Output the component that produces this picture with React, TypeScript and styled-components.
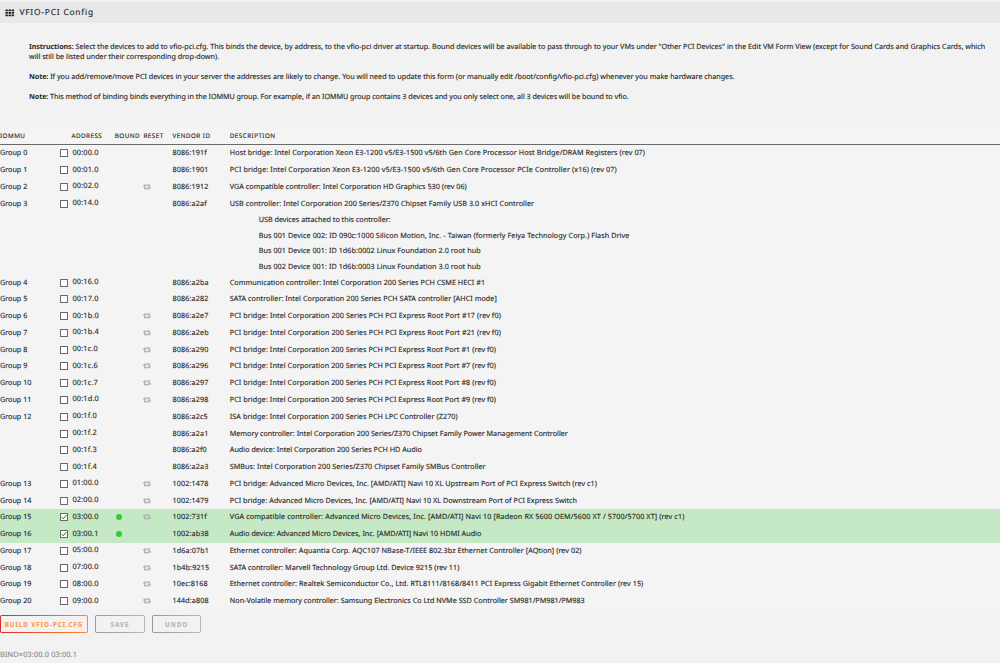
import React from "react";
import styled, { createGlobalStyle } from "styled-components";

const Global = createGlobalStyle`
  * { box-sizing: border-box; }
  body {
    margin: 0;
    background: #f2f2f2;
    color: #2b2b2b;
    font-family: "Noto Sans", sans-serif;
    font-size: 7.2px;
    text-rendering: geometricPrecision;
    -webkit-text-stroke: 0.14px currentColor;
    overflow: hidden;
  }
`;

const Page = styled.main`
  display: flex;
  flex-direction: column;
  height: 663px;
  padding-top: 2px;
`;

const TitleBar = styled.header`
  display: flex;
  align-items: center;
  gap: 4.4px;
  height: 21px;
  padding-left: 5px;
  background: #e8e8e8;
  font-size: 8.4px;
  letter-spacing: 0.8px;
  svg { display: block; }
`;

const Notes = styled.section`
  height: 105px;
  padding: 19.4px 0 0 29px;
  line-height: 10px;
  b { letter-spacing: -0.1px; -webkit-text-stroke: 0; }
`;

const Note = styled.p<{ $track: number }>`
  margin: 0 0 10px;
  white-space: nowrap;
  letter-spacing: ${(p) => p.$track}px;
`;

const Table = styled.section`
  height: 481px;
  background: #f4f4f4;
`;

const Grid = styled.div`
  display: grid;
  grid-template-columns: 59px 12.5px 43.3px 28.7px 29px 57.3px 1fr;
  white-space: nowrap;
`;

const HeadRow = styled(Grid)`
  height: 17px;
  align-items: center;
  padding-bottom: 1px;
  border-bottom: 1px solid #6a6a6a;
  font-size: 6.3px;
  letter-spacing: 0.46px;
`;

const Row = styled(Grid)<{ $bound?: boolean }>`
  grid-auto-rows: 16.77px;
  align-items: center;
  background: ${(p) => (p.$bound ? "#c5e8c5" : "transparent")};
`;

const Address = styled.span`
  padding: 0 0 1px 1px;
  font-size: 7.4px;
  letter-spacing: 0.14px;
`;

const Vendor = styled.span`
  letter-spacing: 0.14px;
`;

const Description = styled.span<{ $track: number }>`
  letter-spacing: ${(p) => p.$track}px;
`;

const Box = styled.span`
  display: grid;
  place-items: center;
  width: 8px;
  height: 8px;
  margin-left: 0.5px;
  border: 1px solid #686868;
  background: #fff;
  svg { display: block; }
`;

const Dot = styled.span`
  display: block;
  width: 6px;
  height: 6px;
  margin-left: 1.5px;
  border-radius: 50%;
  background: #33cc33;
`;

const AttachedList = styled.div`
  height: 62.2px;
  padding: 1px 0 0 258.7px;
  line-height: 15.6px;
  white-space: nowrap;
`;

const Attached = styled.div<{ $track: number }>`
  letter-spacing: ${(p) => p.$track}px;
`;

const Actions = styled.div`
  display: flex;
  gap: 7px;
  padding-top: 6px;
`;

const Button = styled.button<{ $w: number; $primary?: boolean }>`
  width: ${(p) => p.$w}px;
  height: 18px;
  padding: 0;
  border: 1px solid transparent;
  border-radius: 2px;
  background: ${(p) =>
    p.$primary
      ? "linear-gradient(#f2f2f2, #f2f2f2) padding-box, linear-gradient(90deg, #e22828, #ff8c2f) border-box"
      : "linear-gradient(#f2f2f2, #f2f2f2) padding-box, linear-gradient(90deg, #999, #b8b8b8) border-box"};
  color: ${(p) => (p.$primary ? "#ff9650" : "#b5b5b5")};
  font: 700 6.2px "Noto Sans", sans-serif;
  letter-spacing: 0.97px;
  white-space: nowrap;
`;

const Bind = styled.div`
  margin-top: 16px;
  color: #8c8c8c;
  font-size: 7.4px;
  letter-spacing: 0.12px;
  line-height: 12px;
`;

const GridIcon = () => (
  <svg width="10" height="8" viewBox="0 0 10 8" fill="#222">
    {[0, 1, 2].map((r) =>
      [0, 1, 2].map((c) => (
        <rect key={`${r}${c}`} x={0.4 + c * 3.1} y={0.4 + r * 2.5} width="2.5" height="1.9" rx="0.3" />
      ))
    )}
  </svg>
);

const ResetIcon = styled(({ className }: { className?: string }) => (
  <svg className={className} width="8" height="6" viewBox="0 0 30 22" fill="#b4b4b4" stroke="#b4b4b4" strokeWidth="0.8">
    <path d="M20 18.5c0 .3-.2.5-.5.5H5c-.8 0-1-.4-1-1V9H1c-.6 0-1-.4-1-1 0-.2.1-.5.2-.6l5-6c.4-.5 1.200-.5 1.600 0l5 6c.1.2.2.4.2.6 0 .6-.4 1-1 1H8v6h9c.2 0 .3.1.4.200l2.500 3c.1.1.1.2.1.300zM30 13c0 .2-.1.5-.2.6l-5 6c-.4.5-1.200.5-1.600 0l-5-6c-.1-.2-.2-.4-.2-.6 0-.6.4-1 1-1h3V6h-9c-.2 0-.3-.1-.4-.200l-2.500-3C10 2.700 10 2.600 10 2.500c0-.3.2-.5.5-.5H25c.8 0 1 .4 1 1v9h3c.6 0 1 .4 1 1z" />
  </svg>
))`
  display: block;
`;

const CheckIcon = () => (
  <svg width="6" height="6" viewBox="0 0 6 6" fill="none" stroke="#444" strokeWidth="0.9">
    <path d="M0.700 3.100 2.300 4.800 5.500 0.900" />
  </svg>
);

type Device = {
  group?: number;
  address: string;
  vendor: string;
  text: string;
  track: number;
  reset?: boolean;
  bound?: boolean;
  attached?: { text: string; track: number }[];
};

const devices: Device[] = [
  { group: 0, address: "00:00.0", vendor: "8086:191f", track: 0.086, text: "Host bridge: Intel Corporation Xeon E3-1200 v5/E3-1500 v5/6th Gen Core Processor Host Bridge/DRAM Registers (rev 07)" },
  { group: 1, address: "00:01.0", vendor: "8086:1901", track: 0.122, text: "PCI bridge: Intel Corporation Xeon E3-1200 v5/E3-1500 v5/6th Gen Core Processor PCIe Controller (x16) (rev 07)" },
  { group: 2, address: "00:02.0", vendor: "8086:1912", track: 0.03, reset: true, text: "VGA compatible controller: Intel Corporation HD Graphics 530 (rev 06)" },
  {
    group: 3, address: "00:14.0", vendor: "8086:a2af", track: 0.07, text: "USB controller: Intel Corporation 200 Series/Z370 Chipset Family USB 3.0 xHCI Controller",
    attached: [
      { track: 0.01, text: "USB devices attached to this controller:" },
      { track: 0.085, text: "Bus 001 Device 002: ID 090c:1000 Silicon Motion, Inc. - Taiwan (formerly Feiya Technology Corp.) Flash Drive" },
      { track: 0.07, text: "Bus 001 Device 001: ID 1d6b:0002 Linux Foundation 2.0 root hub" },
      { track: 0.07, text: "Bus 002 Device 001: ID 1d6b:0003 Linux Foundation 3.0 root hub" },
    ],
  },
  { group: 4, address: "00:16.0", vendor: "8086:a2ba", track: 0.042, text: "Communication controller: Intel Corporation 200 Series PCH CSME HECI #1" },
  { group: 5, address: "00:17.0", vendor: "8086:a282", track: 0.06, text: "SATA controller: Intel Corporation 200 Series PCH SATA controller [AHCI mode]" },
  { group: 6, address: "00:1b.0", vendor: "8086:a2e7", track: 0.088, reset: true, text: "PCI bridge: Intel Corporation 200 Series PCH PCI Express Root Port #17 (rev f0)" },
  { group: 7, address: "00:1b.4", vendor: "8086:a2eb", track: 0.088, reset: true, text: "PCI bridge: Intel Corporation 200 Series PCH PCI Express Root Port #21 (rev f0)" },
  { group: 8, address: "00:1c.0", vendor: "8086:a290", track: 0.08, reset: true, text: "PCI bridge: Intel Corporation 200 Series PCH PCI Express Root Port #1 (rev f0)" },
  { group: 9, address: "00:1c.6", vendor: "8086:a296", track: 0.08, reset: true, text: "PCI bridge: Intel Corporation 200 Series PCH PCI Express Root Port #7 (rev f0)" },
  { group: 10, address: "00:1c.7", vendor: "8086:a297", track: 0.08, reset: true, text: "PCI bridge: Intel Corporation 200 Series PCH PCI Express Root Port #8 (rev f0)" },
  { group: 11, address: "00:1d.0", vendor: "8086:a298", track: 0.08, reset: true, text: "PCI bridge: Intel Corporation 200 Series PCH PCI Express Root Port #9 (rev f0)" },
  { group: 12, address: "00:1f.0", vendor: "8086:a2c5", track: 0.09, text: "ISA bridge: Intel Corporation 200 Series PCH LPC Controller (Z270)" },
  { address: "00:1f.2", vendor: "8086:a2a1", track: 0.01, text: "Memory controller: Intel Corporation 200 Series/Z370 Chipset Family Power Management Controller" },
  { address: "00:1f.3", vendor: "8086:a2f0", track: 0.02, text: "Audio device: Intel Corporation 200 Series PCH HD Audio" },
  { address: "00:1f.4", vendor: "8086:a2a3", track: 0.055, text: "SMBus: Intel Corporation 200 Series/Z370 Chipset Family SMBus Controller" },
  { group: 13, address: "01:00.0", vendor: "1002:1478", track: 0.064, reset: true, text: "PCI bridge: Advanced Micro Devices, Inc. [AMD/ATI] Navi 10 XL Upstream Port of PCI Express Switch (rev c1)" },
  { group: 14, address: "02:00.0", vendor: "1002:1479", track: 0.03, reset: true, text: "PCI bridge: Advanced Micro Devices, Inc. [AMD/ATI] Navi 10 XL Downstream Port of PCI Express Switch" },
  { group: 15, address: "03:00.0", vendor: "1002:731f", track: 0.123, reset: true, bound: true, text: "VGA compatible controller: Advanced Micro Devices, Inc. [AMD/ATI] Navi 10 [Radeon RX 5600 OEM/5600 XT / 5700/5700 XT] (rev c1)" },
  { group: 16, address: "03:00.1", vendor: "1002:ab38", track: 0.02, bound: true, text: "Audio device: Advanced Micro Devices, Inc. [AMD/ATI] Navi 10 HDMI Audio" },
  { group: 17, address: "05:00.0", vendor: "1d6a:07b1", track: 0.07, reset: true, text: "Ethernet controller: Aquantia Corp. AQC107 NBase-T/IEEE 802.3bz Ethernet Controller [AQtion] (rev 02)" },
  { group: 18, address: "07:00.0", vendor: "1b4b:9215", track: 0.045, reset: true, text: "SATA controller: Marvell Technology Group Ltd. Device 9215 (rev 11)" },
  { group: 19, address: "08:00.0", vendor: "10ec:8168", track: 0.08, reset: true, text: "Ethernet controller: Realtek Semiconductor Co., Ltd. RTL8111/8168/8411 PCI Express Gigabit Ethernet Controller (rev 15)" },
  { group: 20, address: "09:00.0", vendor: "144d:a808", track: 0.026, reset: true, text: "Non-Volatile memory controller: Samsung Electronics Co Ltd NVMe SSD Controller SM981/PM981/PM983" },
];

export default function App() {
  return (
    <>
      <Global />
      <Page>
        <TitleBar>
          <GridIcon />
          VFIO-PCI Config
        </TitleBar>
        <Notes>
          <Note $track={0.012}>
            <b>Instructions:</b> Select the devices to add to vfio-pci.cfg. This binds the device, by address, to the vfio-pci driver at startup. Bound devices will be available to pass through to your VMs under "Other PCI Devices" in the Edit VM Form View (except for Sound Cards and Graphics Cards, which
            <br />
            will still be listed under their corresponding drop-down).
          </Note>
          <Note $track={0.002}>
            <b>Note:</b> If you add/remove/move PCI devices in your server the addresses are likely to change. You will need to update this form (or manually edit /boot/config/vfio-pci.cfg) whenever you make hardware changes.
          </Note>
          <Note $track={-0.032}>
            <b>Note:</b> This method of binding binds everything in the IOMMU group. For example, if an IOMMU group contains 3 devices and you only select one, all 3 devices will be bound to vfio.
          </Note>
        </Notes>
        <Table>
          <HeadRow>
            <span>IOMMU</span>
            <span />
            <span>ADDRESS</span>
            <span>BOUND</span>
            <span>RESET</span>
            <span>VENDOR ID</span>
            <span>DESCRIPTION</span>
          </HeadRow>
          {devices.map((d) => (
            <React.Fragment key={d.address}>
              <Row $bound={d.bound}>
                <span>{d.group !== undefined && `Group ${d.group}`}</span>
                <Box>{d.bound && <CheckIcon />}</Box>
                <Address>{d.address}</Address>
                <span>{d.bound && <Dot />}</span>
                <span>{d.reset && <ResetIcon />}</span>
                <Vendor>{d.vendor}</Vendor>
                <Description $track={d.track}>{d.text}</Description>
              </Row>
              {d.attached && (
                <AttachedList>
                  {d.attached.map((a) => (
                    <Attached key={a.text} $track={a.track}>{a.text}</Attached>
                  ))}
                </AttachedList>
              )}
            </React.Fragment>
          ))}
        </Table>
        <Actions>
          <Button $w={88} $primary>BUILD VFIO-PCI.CFG</Button>
          <Button $w={50}>SAVE</Button>
          <Button $w={49}>UNDO</Button>
        </Actions>
        <Bind>BIND=03:00.0 03:00.1</Bind>
      </Page>
    </>
  );
}
